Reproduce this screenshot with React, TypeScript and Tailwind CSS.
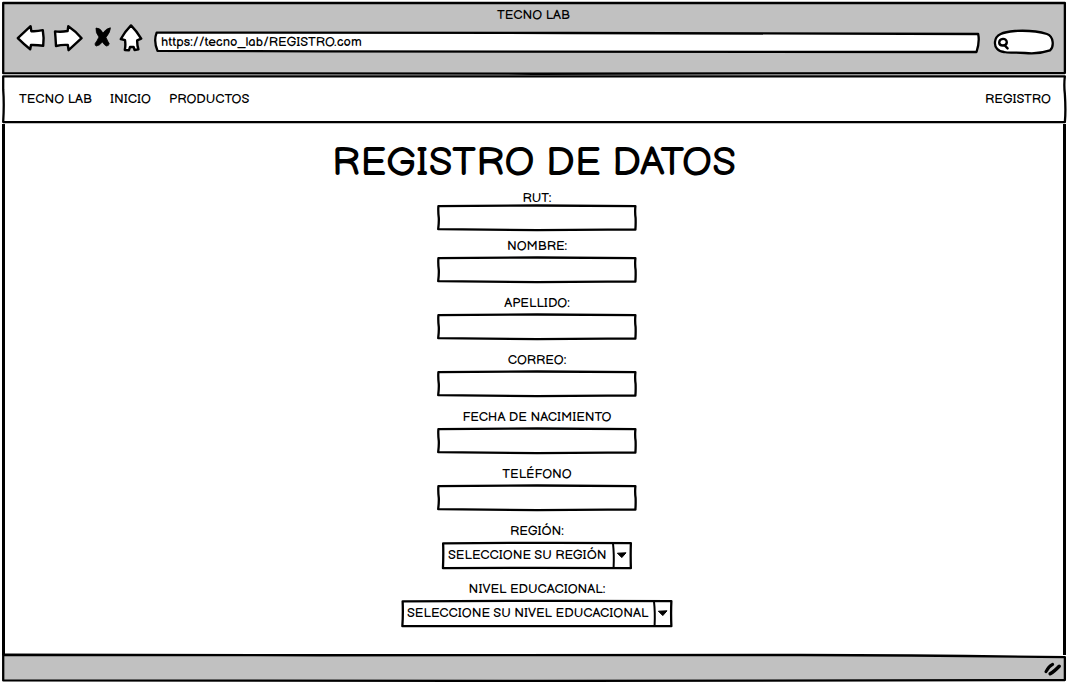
import React from "react";

type FrameProps = { d: string; fill?: string; widthClass?: string };

/** Hand-drawn outline that stretches with the box it decorates. */
function SketchFrame({ d, fill = "none", widthClass = "stroke-[2.3px]" }: FrameProps) {
  return (
    <svg
      aria-hidden="true"
      viewBox="0 0 100 100"
      preserveAspectRatio="none"
      className="pointer-events-none absolute inset-0 h-full w-full overflow-visible"
    >
      <path
        d={d}
        fill={fill}
        stroke="#000"
        className={widthClass}
        strokeLinejoin="round"
        strokeLinecap="round"
        vectorEffect="non-scaling-stroke"
      />
    </svg>
  );
}

const INPUT_OUTLINE =
  "M0.7 4 Q25 2.5 50 2 Q75 3 99.2 4.5 Q98.9 30 99.3 50 Q99.4 75 99.2 95 Q75 94 50 96.5 Q25 95.5 0.6 93 Q1 70 0.9 50 Q0.5 25 0.7 4 Z";
const SELECT_OUTLINE =
  "M0.6 5 Q50 2 99.4 4 Q99.2 50 99.4 97 Q50 95 0.5 97 Q0.8 50 0.6 5 Z";

function TextField({ id, label, type = "text", tight = false }: { id: string; label: string; type?: string; tight?: boolean }) {
  return (
    <div className={tight ? "flex flex-col items-center" : "flex flex-col items-center gap-1"}>
      <label htmlFor={id} className="leading-[14px]">{label}</label>
      <div className="relative h-[26px] w-[200px]">
        <SketchFrame d={INPUT_OUTLINE} fill="#fff" />
        <input id={id} name={id} type={type} className="relative block h-full w-full bg-transparent px-2 outline-none" />
      </div>
    </div>
  );
}

function SelectField({ id, label, placeholder, widthClass }: { id: string; label: string; placeholder: string; widthClass: string }) {
  return (
    <div className="flex flex-col items-center gap-1">
      <label htmlFor={id} className="leading-[14px]">{label}</label>
      <div className={`relative flex h-[27px] ${widthClass}`}>
        <SketchFrame d={SELECT_OUTLINE} fill="#fff" />
        <select id={id} name={id} className="relative block h-full w-full appearance-none bg-transparent pl-[6px] outline-none">
          <option>{placeholder}</option>
        </select>
        <svg aria-hidden="true" viewBox="0 0 20 27" className="pointer-events-none absolute right-0 top-0 h-full w-5">
          <path d="M1 1.5 Q2.2 12 1.6 25.5" fill="none" stroke="#000" strokeWidth="2" />
          <path d="M5.4 11.2 L14 10.8 L9.8 15.6 Z" fill="#000" stroke="#000" strokeLinejoin="round" />
        </svg>
      </div>
    </div>
  );
}

function Toolbar() {
  return (
    <div className="flex h-9 items-center pl-4 pr-[13px]">
      <button type="button" aria-label="Atrás" className="mr-[6px]">
        <svg viewBox="16 24 30 36" className="h-9 w-[30px]">
          <path d="M17.8 38.2 L30.6 26.2 L31.3 31.2 Q37 31.6 42.8 30.2 Q44.2 38 43.2 45.8 Q37 44.8 31 45 L30.2 49.2 Q24 44.5 17.8 38.2 Z" fill="#fff" stroke="#000" strokeWidth="2.4" strokeLinejoin="round" />
        </svg>
      </button>
      <button type="button" aria-label="Adelante" className="mr-[9px]">
        <svg viewBox="52 24 32 36" className="h-9 w-8">
          <path d="M55 31.4 Q61 32.2 67.6 31 L68.3 26.2 Q75.5 31 81.6 38.2 L68.6 50.2 L67.8 45 Q62 44.6 56 46 Q55.6 38 55 31.4 Z" fill="#fff" stroke="#000" strokeWidth="2.4" strokeLinejoin="round" />
        </svg>
      </button>
      <button type="button" aria-label="Detener" className="mr-[6px]">
        <svg viewBox="93 24 20 36" className="h-9 w-5">
          <path d="M96 28 Q100 27.5 103 33 Q106 28.5 110.4 27.8 Q110.5 32 106 37.4 Q108 42 109.2 43.6 Q109 46 106.4 46 Q104.5 45.2 102.4 42 Q99.5 45.6 96.4 46 Q94.6 45.6 95.2 43.4 Q97 41 99 37 Q95.4 32.5 96 28 Z" fill="#000" stroke="#000" strokeWidth="0.8" strokeLinejoin="round" />
        </svg>
      </button>
      <button type="button" aria-label="Inicio del navegador" className="mr-3">
        <svg viewBox="119 24 24 36" className="h-9 w-6">
          <path d="M131 25.4 Q136.5 31 141.2 38.6 L137.2 40.4 Q137 45 138.4 49.4 L134.6 50 L133.6 47 L130 47 L129 50.2 L124.8 50 Q125.8 45 125 40.2 L120.8 39 Q125 31.5 131 25.4 Z" fill="#fff" stroke="#000" strokeWidth="2.4" strokeLinejoin="round" />
        </svg>
      </button>
      <div className="relative h-5 flex-1">
        <SketchFrame d="M0.2 3 Q25 3 50 5 L99.9 10 Q100.1 50 99.7 100 Q50 100 20 97 L0.3 94 Q-0.2 45 0.2 3 Z" fill="#fff" />
        <input aria-label="Dirección" defaultValue="https://tecno_lab/REGISTRO.com" className="relative block h-5 w-full bg-transparent px-[6px] outline-none" />
      </div>
      <div className="relative ml-[14px] h-6 w-[61px]">
        <svg aria-hidden="true" viewBox="0 0 61 24" className="pointer-events-none absolute inset-0 h-full w-full overflow-visible">
          <path d="M2 12 C2.6 4 10 2.2 22 1 C32 0.4 44 1 54 4 C61 6.5 61 17 57 20.4 C50 22.8 40 23.8 32 23 C22 21.8 17 23.4 11 22 C5 21.4 1.4 17 2 12 Z" fill="#fff" stroke="#000" strokeWidth="2.3" />
          <path d="M6.2 12.6 C6.2 8 13.6 7.4 13.8 12.2 C13.6 16.6 6.4 16.6 6.2 12.6 Z M11.4 15.2 L14.6 18.4" fill="none" stroke="#000" strokeWidth="2.4" strokeLinecap="round" />
        </svg>
        <input type="search" aria-label="Buscar" className="relative block h-full w-full bg-transparent pl-4 pr-2 outline-none" />
      </div>
    </div>
  );
}

export default function App() {
  return (
    <div className="flex min-h-screen flex-col bg-white font-['Balsamiq_Sans',Inter,sans-serif] text-[13px] text-black">
      <header className="relative h-[75px] shrink-0">
        <SketchFrame d="M0.3 4 Q50 3 99.8 4 Q99.8 50 99.8 97.3 L50 98.3 L0.3 97.6 Z" fill="#c1c1c1" />
        <div className="relative pt-[7px]">
          <p className="text-center leading-[17px]">TECNO LAB</p>
          <Toolbar />
        </div>
      </header>

      <nav className="relative flex h-12 shrink-0 items-center gap-[18px] pl-[19px] pr-4 pt-[2px]">
        <SketchFrame d="M0.3 3 L99.8 3 Q99.7 20 99.8 40 Q99.9 75 99.8 98 Q50 98 0.3 98 Q0.4 60 0.3 30 Z" />
        <a href="#" className="relative">TECNO LAB</a>
        <a href="#inicio" className="relative">INICIO</a>
        <a href="#productos" className="relative">PRODUCTOS</a>
        <a href="#registro" className="relative ml-auto">REGISTRO</a>
      </nav>

      <main className="ml-[2px] mr-px mt-px flex grow flex-col items-center border-x-[3px] border-black pb-6">
        <h1 className="pt-[19px] text-[40px] font-medium leading-[40px]">REGISTRO DE DATOS</h1>
        <form className="flex flex-col items-center gap-2 pl-[6px] pt-2">
          <TextField id="rut" label="RUT:" tight />
          <div className="flex flex-col items-center gap-[13px]">
            <TextField id="nombre" label="NOMBRE:" />
            <TextField id="apellido" label="APELLIDO:" />
            <TextField id="correo" label="CORREO:" type="email" />
            <TextField id="nacimiento" label="FECHA DE NACIMIENTO" />
            <TextField id="telefono" label="TELÉFONO" type="tel" />
            <SelectField id="region" label="REGIÓN:" placeholder="SELECCIONE SU REGIÓN" widthClass="w-[190px]" />
            <SelectField id="nivel" label="NIVEL EDUCACIONAL:" placeholder="SELECCIONE SU NIVEL EDUCACIONAL" widthClass="w-[272px]" />
          </div>
        </form>
      </main>

      <footer className="relative flex h-[27px] shrink-0 items-center justify-end pr-[5px]">
        <SketchFrame d="M0.3 -1 L30 1 L75 0 Q88 2 99.8 8 L99.8 93 L50 96 L0.3 94 Z" fill="#c1c1c1" />
        <svg aria-hidden="true" viewBox="0 0 18 14" className="relative h-[14px] w-[18px]">
          <path d="M2 9.6 Q4.6 4.4 8.6 2.4" fill="none" stroke="#000" strokeWidth="3" strokeLinecap="round" />
          <path d="M6.2 11.8 Q10 9.6 15.2 4.2" fill="none" stroke="#000" strokeWidth="3.4" strokeLinecap="round" />
        </svg>
      </footer>
    </div>
  );
}
